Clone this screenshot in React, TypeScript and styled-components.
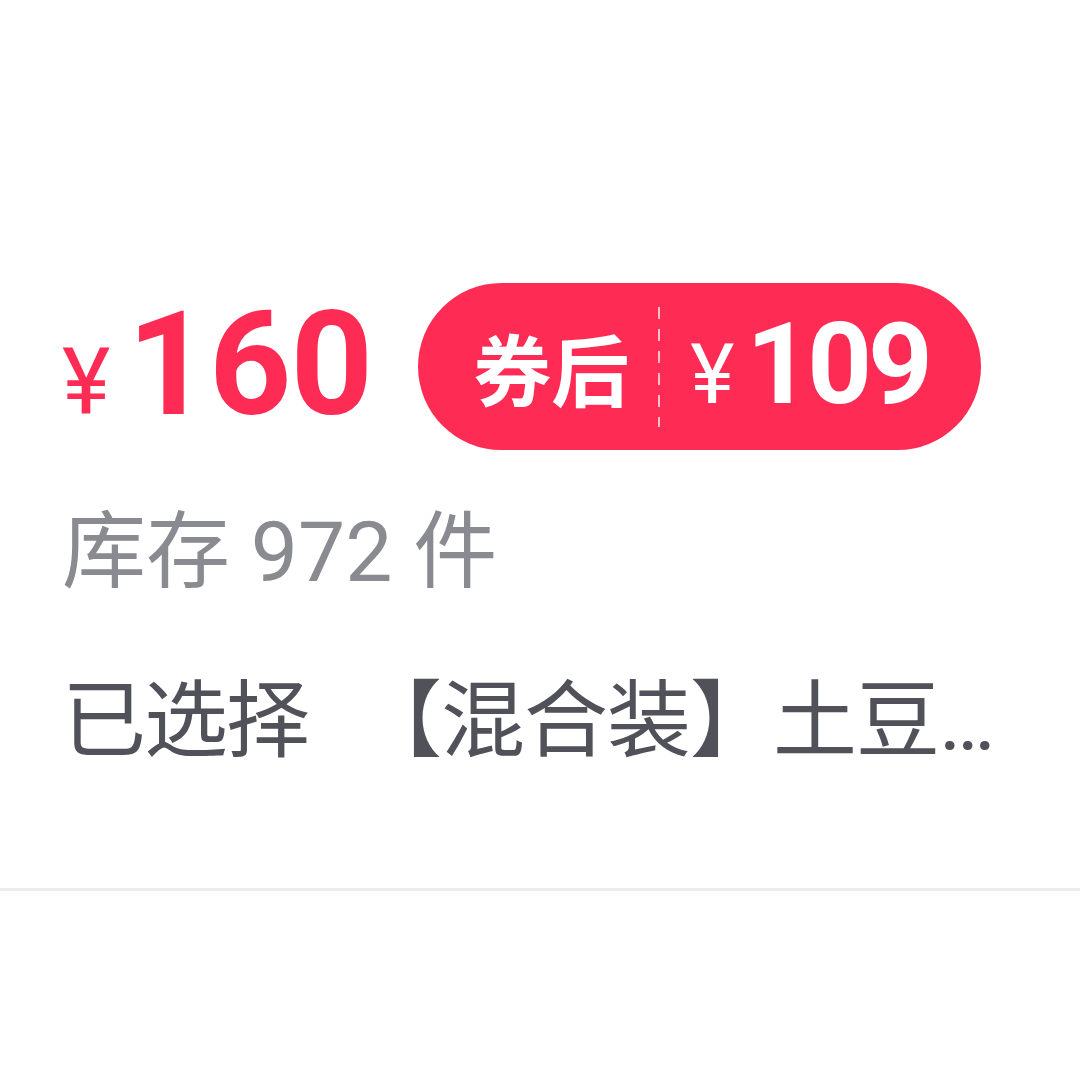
import React from "react";
import styled, { createGlobalStyle } from "styled-components";

const GlobalStyle = createGlobalStyle`
  html, body {
    margin: 0;
    padding: 0;
    background: #ffffff;
  }
  body {
    font-family: Roboto, "Noto Sans CJK SC", sans-serif;
  }
`;

const RED = "#FE2C55";

const Page = styled.div`
  width: 1080px;
  min-height: 1080px;
  background: #ffffff;
  padding-top: 283px;
  box-sizing: border-box;
`;

const Content = styled.div`
  padding: 0 60px 0 62px;
`;

const PriceRow = styled.div`
  display: flex;
  align-items: center;
  height: 167px;
`;

const Price = styled.div`
  display: flex;
  align-items: baseline;
  color: ${RED};
  font-family: Roboto, sans-serif;
  line-height: 1;
  margin-right: 46px;
  margin-bottom: 4px;
`;

const Yen = styled.span<{ $size: number }>`
  font-size: ${(p) => p.$size}px;
  font-weight: 400;
`;

const Amount = styled.span<{ $size: number; $gap: number; $spacing: number }>`
  font-size: ${(p) => p.$size}px;
  font-weight: 700;
  margin-left: ${(p) => p.$gap}px;
  letter-spacing: ${(p) => p.$spacing}px;
`;

const CouponPill = styled.div`
  display: flex;
  align-items: center;
  height: 167px;
  border-radius: 84px;
  background: ${RED};
  color: #ffffff;
  padding: 0 52px 0 55px;
  box-sizing: border-box;
`;

const CouponLabel = styled.span`
  font-family: "Noto Sans CJK SC", sans-serif;
  font-size: 78px;
  font-weight: 700;
  line-height: 1;
`;

const DashedDivider = styled.span`
  width: 2px;
  height: 120px;
  background: repeating-linear-gradient(
    to bottom,
    rgba(255, 255, 255, 0.7) 0 12px,
    transparent 12px 22px
  );
  margin: 0 30px 0 29px;
`;

const CouponPrice = styled.div`
  display: flex;
  align-items: baseline;
  font-family: Roboto, sans-serif;
  line-height: 1;
  margin-bottom: 4px;
`;

const StockLine = styled.div`
  margin-top: 53px;
  font-size: 84px;
  line-height: 100px;
  color: #8a8b91;
  font-family: Roboto, "Noto Sans CJK SC", sans-serif;
  white-space: nowrap;
`;

const SelectedLine = styled.div`
  margin-top: 69px;
  display: flex;
  align-items: baseline;
  font-size: 84px;
  line-height: 100px;
  color: #505159;
  font-family: Roboto, "Noto Sans CJK SC", sans-serif;
`;

const SelectedLabel = styled.span`
  flex: none;
  letter-spacing: -2px;
`;

const SelectedValue = styled.span`
  flex: 1;
  min-width: 0;
  margin-left: 50px;
  letter-spacing: -1px;
  white-space: nowrap;
  overflow: hidden;
  text-overflow: ellipsis;
`;

const Divider = styled.div`
  margin-top: 116px;
  height: 3px;
  background: #ececec;
`;

export default function App() {
  return (
    <>
      <GlobalStyle />
      <Page>
        <Content>
          <PriceRow>
            <Price>
              <Yen $size={92}>¥</Yen>
              <Amount $size={144} $gap={17} $spacing={-1}>160</Amount>
            </Price>
            <CouponPill>
              <CouponLabel>券后</CouponLabel>
              <DashedDivider />
              <CouponPrice>
                <Yen $size={84}>¥</Yen>
                <Amount $size={113} $gap={12} $spacing={-4}>109</Amount>
              </CouponPrice>
            </CouponPill>
          </PriceRow>
          <StockLine>库存 972 件</StockLine>
          <SelectedLine>
            <SelectedLabel>已选择</SelectedLabel>
            <SelectedValue>【混合装】土豆…</SelectedValue>
          </SelectedLine>
        </Content>
        <Divider />
      </Page>
    </>
  );
}
